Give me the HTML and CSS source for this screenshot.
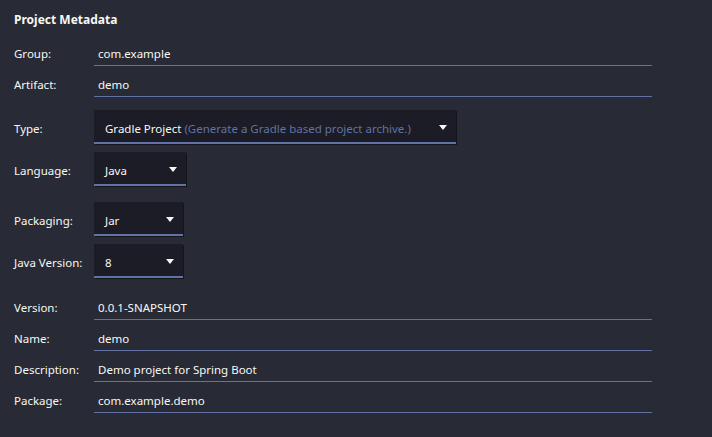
FILE: index.html
```html
<!DOCTYPE html>
<html>
<head>
<meta charset="utf-8">
<link rel="stylesheet" href="styles.css">
</head>
<body>
<div class="panel">
  <h2 class="title">Project Metadata</h2>

  <div class="group g1">
    <div class="row">
      <label class="label">Group:</label>
      <div class="input">com.example</div>
    </div>
    <div class="row">
      <label class="label">Artifact:</label>
      <div class="input">demo</div>
    </div>
  </div>

  <div class="group g2">
    <div class="row">
      <label class="label">Type:</label>
      <div class="select sel-type"><span class="val">Gradle Project <span class="hint">(Generate a Gradle based project archive.)</span></span><span class="arrow"></span></div>
    </div>
    <div class="row">
      <label class="label">Language:</label>
      <div class="select sel-lang"><span class="val">Java</span><span class="arrow"></span></div>
    </div>
  </div>

  <div class="group g3">
    <div class="row">
      <label class="label">Packaging:</label>
      <div class="select sel-small"><span class="val">Jar</span><span class="arrow"></span></div>
    </div>
    <div class="row">
      <label class="label">Java Version:</label>
      <div class="select sel-small"><span class="val">8</span><span class="arrow"></span></div>
    </div>
  </div>

  <div class="group g4">
    <div class="row">
      <label class="label">Version:</label>
      <div class="input">0.0.1-SNAPSHOT</div>
    </div>
    <div class="row">
      <label class="label">Name:</label>
      <div class="input">demo</div>
    </div>
    <div class="row">
      <label class="label">Description:</label>
      <div class="input">Demo project for Spring Boot</div>
    </div>
    <div class="row">
      <label class="label">Package:</label>
      <div class="input">com.example.demo</div>
    </div>
  </div>
</div>
</body>
</html>
```

FILE: styles.css
```css
html, body {
  margin: 0;
  padding: 0;
  background: #282a36;
  width: 712px;
  height: 437px;
  overflow: hidden;
}
body {
  font-family: "Noto Sans", "Noto Sans CJK KR", sans-serif;
  font-size: 11.5px;
  color: #f8f8f2;
}
.panel {
  padding: 11px 0 0 14px;
}
.title {
  margin: 0;
  font-size: 12px;
  font-weight: 700;
  line-height: 18px;
  height: 18px;
}
.group {
  display: flex;
  flex-direction: column;
}
.g1 { margin-top: 12px; gap: 6px; }
.g2 { margin-top: 13px; gap: 8px; }
.g3 { margin-top: 16px; gap: 8px; }
.g4 { margin-top: 17px; gap: 6px; }
.row {
  display: flex;
  align-items: baseline;
}
.label {
  width: 80px;
  flex: none;
  line-height: 16px;
}
.input {
  width: 554px;
  height: 23px;
  line-height: 24px;
  padding: 1px 0 0 4px;
  border-bottom: 1px solid #6272a4;
  box-sizing: content-box;
}
.select {
  display: flex;
  align-items: center;
  justify-content: space-between;
  height: 34px;
  background: #1b1c25;
  border-bottom: 2px solid #6272a4;
  box-shadow: 1px 1px 0 #14151b;
  padding: 5px 9px 0 11px;
  box-sizing: border-box;
}
.sel-type { width: 362px; }
.sel-lang { width: 92px; }
.sel-small { width: 89px; }
.val {
  white-space: nowrap;
}
.hint {
  color: #6272a4;
}
.arrow {
  width: 0;
  height: 0;
  margin-bottom: 3px;
  border-left: 4px solid transparent;
  border-right: 4px solid transparent;
  border-top: 5px solid #f8f8f2;
}
```
